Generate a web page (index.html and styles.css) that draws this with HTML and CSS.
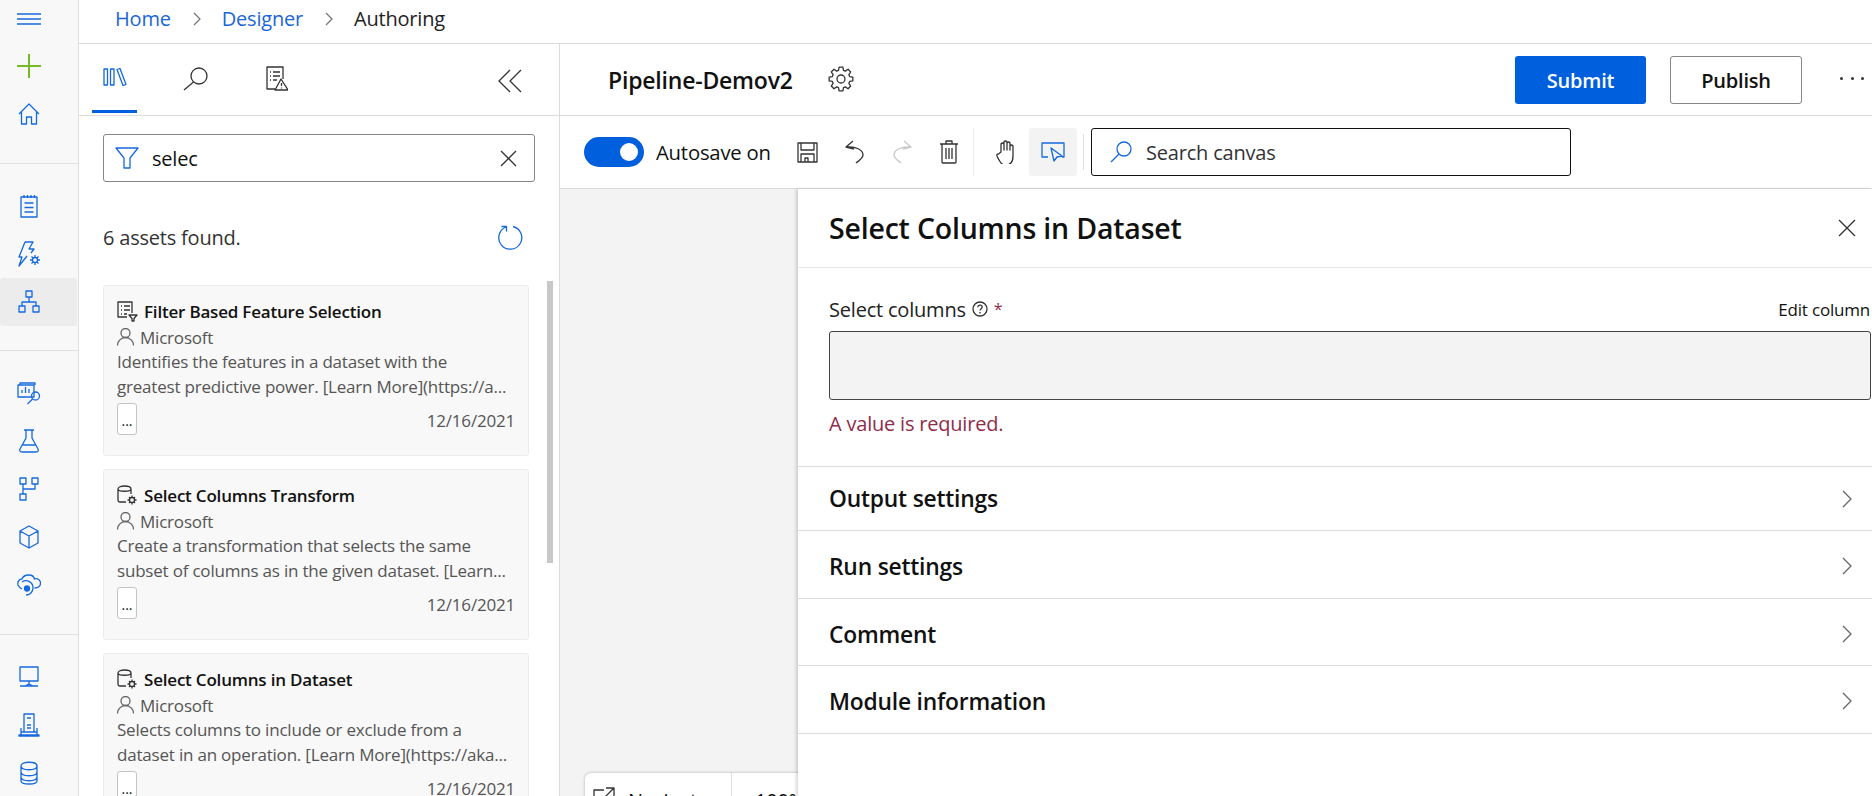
FILE: index.html
```html
<!DOCTYPE html>
<html lang="en">
<head>
<meta charset="utf-8">
<title>Authoring</title>
<link rel="stylesheet" href="styles.css">
</head>
<body>
<div class="app">
  <nav class="nav">
    <div class="nav-menu"><svg width="24" height="12" viewBox="0 0 24 12"><path d="M0 1h24M0 6h24M0 11h24"/></svg></div>
    <div class="nav-item"><svg width="24" height="24" viewBox="0 0 24 24"><path class="green" d="M0 12h24M12 0v24"/></svg></div>
    <div class="nav-item"><svg width="22" height="22" viewBox="0 0 22 22"><path d="M1 11 11 1l10 10M3.500 9v12h5v-7h5v7h5V9"/></svg></div>
    <div class="nav-div"></div>
    <div class="nav-item"><svg width="18" height="24" viewBox="0 0 18 24"><path d="M1 3h16v20H1zM4 1v3M7.500 1v3M11 1v3M14.500 1v3M4.500 9h9M4.500 13.500h9M4.500 18h9"/></svg></div>
    <div class="nav-item"><svg width="22" height="26" viewBox="0 0 22 26"><path d="M7 1h8l-4 7h5l-3 4M9 15 1 25l3-9H1L7 1"/><circle cx="17" cy="19" r="2.500"/><path d="M17 14v2M17 22v2M12 19h2M20 19h2M13.500 15.500l1.500 1.500M19 21l1.500 1.500M13.500 22.500 15 21M19 17l1.500-1.500"/></svg></div>
    <div class="nav-item active"><svg width="22" height="24" viewBox="0 0 22 24"><path d="M8 1h6v6H8zM1 16h6v6H1zM15 16h6v6h-6zM11 7v5M4 16v-4h14v4"/></svg></div>
    <div class="nav-div"></div>
    <div class="nav-item"><svg width="24" height="24" viewBox="0 0 24 24"><path d="M3 4V2h15v2M1 4h16v12H1zM5 12V9M8.500 12V6M12 12V8"/><circle cx="18.500" cy="15" r="4"/><path d="m15.500 18-5 5"/></svg></div>
    <div class="nav-item"><svg width="20" height="24" viewBox="0 0 20 24"><path d="M5 1h10M7 1v8L1 20q-1 3 2 3h14q3 0 2-3L13 9V1M3.500 16h13"/></svg></div>
    <div class="nav-item"><svg width="20" height="24" viewBox="0 0 20 24"><path d="M1 1h6v6H1zM13 1h6v6h-6zM1 17h6v6H1zM4 7v10M16 7v5H4"/></svg></div>
    <div class="nav-item"><svg width="20" height="24" viewBox="0 0 20 24"><path d="m10 1 9 5v12l-9 5-9-5V6zM1 6l9 5 9-5M10 11v12"/></svg></div>
    <div class="nav-item"><svg width="24" height="22" viewBox="0 0 24 22"><path d="M1 11C0 7 3 5 5 5c1-3 4-4 7-4s5 2 5.500 4c3-1 6 1 6 4s-2 5-6 5M5 8a7 7 0 0 1 11 6 7 7 0 0 1-7 7M1 11c1 2 2 3 4 4"/><circle class="dot" cx="10" cy="14.500" r="2.500"/></svg></div>
    <div class="nav-div"></div>
    <div class="nav-item"><svg width="20" height="22" viewBox="0 0 20 22"><path d="M1 1h18v14H1zM10 15v4M1 20h18M6 20l4-2 4 2"/></svg></div>
    <div class="nav-item"><svg width="22" height="24" viewBox="0 0 22 24"><path d="M6 1h10v18H6zM9 5h4M9 12h4M9 15h4M3 15v7M19 15v7M1 22h20v1H1zM3 19h16"/></svg></div>
    <div class="nav-item"><svg width="18" height="24" viewBox="0 0 18 24"><path d="M1 5v15c0 4 16 4 16 0V5M1 5c0-5 16-5 16 0s-16 5-16 0M1 11c0 5 16 5 16 0M1 16c0 5 16 5 16 0"/></svg></div>
  </nav>

  <div class="main">
    <header class="crumbs">
      <a class="crumb-link">Home</a>
      <svg class="chev" width="8" height="14" viewBox="0 0 8 14"><path d="m1 1 6 6-6 6"/></svg>
      <a class="crumb-link">Designer</a>
      <svg class="chev" width="8" height="14" viewBox="0 0 8 14"><path d="m1 1 6 6-6 6"/></svg>
      <span class="crumb-current">Authoring</span>
    </header>

    <div class="workspace">
      <aside class="assets">
        <div class="tabs">
          <div class="tab tab-on"><svg width="24" height="18" viewBox="0 0 24 18"><path class="blue" d="M1 1h3.500v16H1zM7.500 1H11v16H7.500zM14 1.500l3-1 6 16-3 1z"/></svg></div>
          <div class="tab"><svg width="25" height="24" viewBox="0 0 25 24"><circle class="ink" cx="16" cy="9" r="8"/><path class="ink" d="M10.500 15 1 23"/></svg></div>
          <div class="tab"><svg width="22" height="25" viewBox="0 0 22 25"><path class="ink" d="M9 23H1V1h16v12M4 6h1M7 6h7M4 10h1M7 10h7M4 14h1M7 14h4M15 13l-6 11h13zM15.500 17v3M15.500 21.500v1"/></svg></div>
          <div class="tab-end"><svg width="24" height="24" viewBox="0 0 24 24"><path class="ink" d="M12 1 1 12l11 11M23 1 12 12l11 11"/></svg></div>
        </div>

        <div class="filter">
          <svg class="filter-icon" width="24" height="22" viewBox="0 0 24 22"><path class="blue" d="M1 1h22l-8 10v10H9V11z"/></svg>
          <span class="filter-text">selec</span>
          <svg width="17" height="17" viewBox="0 0 17 17"><path class="ink" d="m1 1 15 15M16 1 1 16"/></svg>
        </div>

        <div class="found">
          <span>6 assets found.</span>
          <svg width="25" height="25" viewBox="0 0 25 25"><path class="blue" d="M8 2A11.500 11.500 0 1 0 15 1.500M3.500 1.500h5v5"/></svg>
        </div>

        <div class="list">
          <div class="cards">
            <article class="card">
              <div class="card-title"><svg width="21" height="21" viewBox="0 0 21 21"><path class="ink" d="M10 16H1V1h14v11M4 5h1M7 5h6M4 9h1M7 9h6M4 13h1M7 13h3M12 14h8l-3 3.500V20h-2v-2.500z"/></svg><b>Filter Based Feature Selection</b></div>
              <div class="card-owner"><svg width="17" height="18" viewBox="0 0 17 18"><circle class="grey" cx="8.500" cy="5" r="4.500"/><path class="grey" d="M.5 17.500a8 8 0 0 1 16 0"/></svg><span>Microsoft</span></div>
              <div class="card-desc">Identifies the features in a dataset with the</div>
              <div class="card-desc">greatest predictive power. [Learn More](https://a...</div>
              <div class="card-foot"><span class="more">...</span><span class="date">12/16/2021</span></div>
            </article>
            <article class="card">
              <div class="card-title"><svg width="21" height="21" viewBox="0 0 21 21"><path class="ink" d="M9 17H3q-2 0-2-2V4c0-4 13-4 13 0v5M1 4c0 3 13 3 13 0"/><circle class="ink" cx="15" cy="15" r="2.500"/><path class="ink" d="M15 10.500v2M15 17.500v2M10.500 15h2M17.500 15h2M12 12l1 1M17 17l1 1M12 18l1-1M17 13l1-1"/></svg><b>Select Columns Transform</b></div>
              <div class="card-owner"><svg width="17" height="18" viewBox="0 0 17 18"><circle class="grey" cx="8.500" cy="5" r="4.500"/><path class="grey" d="M.5 17.500a8 8 0 0 1 16 0"/></svg><span>Microsoft</span></div>
              <div class="card-desc">Create a transformation that selects the same</div>
              <div class="card-desc">subset of columns as in the given dataset. [Learn...</div>
              <div class="card-foot"><span class="more">...</span><span class="date">12/16/2021</span></div>
            </article>
            <article class="card">
              <div class="card-title"><svg width="21" height="21" viewBox="0 0 21 21"><path class="ink" d="M9 17H3q-2 0-2-2V4c0-4 13-4 13 0v5M1 4c0 3 13 3 13 0"/><circle class="ink" cx="15" cy="15" r="2.500"/><path class="ink" d="M15 10.500v2M15 17.500v2M10.500 15h2M17.500 15h2M12 12l1 1M17 17l1 1M12 18l1-1M17 13l1-1"/></svg><b>Select Columns in Dataset</b></div>
              <div class="card-owner"><svg width="17" height="18" viewBox="0 0 17 18"><circle class="grey" cx="8.500" cy="5" r="4.500"/><path class="grey" d="M.5 17.500a8 8 0 0 1 16 0"/></svg><span>Microsoft</span></div>
              <div class="card-desc">Selects columns to include or exclude from a</div>
              <div class="card-desc">dataset in an operation. [Learn More](https://aka...</div>
              <div class="card-foot"><span class="more">...</span><span class="date">12/16/2021</span></div>
            </article>
          </div>
          <div class="scrollbar"></div>
        </div>
      </aside>

      <section class="editor">
        <div class="title-bar">
          <h1 class="pipeline">Pipeline-Demov2</h1>
          <svg class="gear" width="26" height="26" viewBox="-13 -13 26 26"><polygon class="ink" points="-2.480,-8.650 -1.880,-11.850 1.880,-11.850 2.480,-8.650 4.360,-7.870 7.050,-9.710 9.710,-7.050 7.870,-4.360 8.650,-2.480 11.850,-1.880 11.850,1.880 8.650,2.480 7.870,4.360 9.710,7.050 7.050,9.710 4.360,7.870 2.480,8.650 1.880,11.850 -1.880,11.850 -2.480,8.650 -4.360,7.870 -7.050,9.710 -9.710,7.050 -7.870,4.360 -8.650,2.480 -11.850,1.880 -11.850,-1.880 -8.650,-2.480 -7.870,-4.360 -9.710,-7.050 -7.050,-9.710 -4.360,-7.870"/><circle class="ink" r="4"/></svg>
          <div class="spacer"></div>
          <button class="btn btn-primary">Submit</button>
          <button class="btn btn-outline">Publish</button>
          <div class="dots"><i></i><i></i><i></i></div>
        </div>

        <div class="toolbar">
          <span class="toggle"><i></i></span>
          <span class="toggle-label">Autosave on</span>
          <div class="tool-group">
            <svg class="t-save" width="21" height="21" viewBox="0 0 21 21"><path class="ink" d="M1 1h19v19H1zM4 1v7h13V1M4 20v-8h13v8M8 20v-4h3v4"/></svg>
            <svg class="t-undo" width="19" height="24" viewBox="0 0 19 24"><path class="ink" d="M8 1 1 7l8 2M1 7c10-1 17 3 17 8 0 3-3 5-7 8"/></svg>
            <svg class="t-redo" width="19" height="24" viewBox="0 0 19 24"><path class="faint" d="M11 1l7 6-8 2M18 7C8 6 1 10 1 15c0 3 3 5 7 8"/></svg>
            <svg class="t-trash" width="20" height="24" viewBox="0 0 20 24"><path class="ink" d="M1 4h18M7 4V1h6v3M3 4v18q0 1 1 1h12q1 0 1-1V4M7 8v11M10 8v11M13 8v11"/></svg>
          </div>
          <svg class="t-hand" width="19" height="24" viewBox="0 0 19 24"><path class="ink" d="M5 12V4q1.500-2 3 0v6-8q1.500-2 3 0v8-7q1.500-2 3 0v7-4q1.500-2 3 0v10c0 6-3 9-7 9-5 0-6-3-9-9q-.5-2 1.500-2z"/></svg>
          <div class="t-select"><svg width="24" height="20" viewBox="0 0 24 20"><path class="blue" d="M7 15H1V1h22v14h-2M10 6l11 8-5 1-3 4z"/></svg></div>
          <div class="t-sep"></div>
          <div class="canvas-search">
            <svg width="22" height="22" viewBox="0 0 22 22"><circle class="blue" cx="14" cy="8" r="7"/><path class="blue" d="m9 13-8 8"/></svg>
            <span>Search canvas</span>
          </div>
        </div>

        <div class="stage">
          <div class="canvas">
            <div class="navigator">
              <div class="nav-left"><svg width="22" height="20" viewBox="0 0 22 20"><path class="ink" d="M20 10v8H1V3h10M13 1h8v8M21 1l-9 9"/></svg><span>Navigator</span></div>
              <div class="nav-zoom">100%</div>
            </div>
          </div>

          <div class="panel">
            <div class="panel-head">
              <h2>Select Columns in Dataset</h2>
              <svg width="18" height="18" viewBox="0 0 18 18"><path class="ink" d="m1 1 16 16M17 1 1 17"/></svg>
            </div>
            <div class="panel-body">
              <div class="field-head">
                <span class="field-label">Select columns</span>
                <svg class="help" width="16" height="16" viewBox="0 0 16 16"><circle class="ink" cx="8" cy="8" r="7"/><path class="ink" d="M5.800 6.200q.2-2 2.200-2 2.200 0 2.200 1.900c0 1.700-2.200 1.600-2.200 3.500M8 11v1.500"/></svg>
                <span class="req">*</span>
                <span class="spacer"></span>
                <a class="edit">Edit column</a>
              </div>
              <div class="field-box"></div>
              <div class="error">A value is required.</div>
            </div>
            <div class="row r1"><span>Output settings</span><svg width="10" height="18" viewBox="0 0 10 18"><path class="grey" d="m1 1 8 8-8 8"/></svg></div>
            <div class="row r2"><span>Run settings</span><svg width="10" height="18" viewBox="0 0 10 18"><path class="grey" d="m1 1 8 8-8 8"/></svg></div>
            <div class="row r3"><span>Comment</span><svg width="10" height="18" viewBox="0 0 10 18"><path class="grey" d="m1 1 8 8-8 8"/></svg></div>
            <div class="row r4"><span>Module information</span><svg width="10" height="18" viewBox="0 0 10 18"><path class="grey" d="m1 1 8 8-8 8"/></svg></div>
          </div>
        </div>
      </section>
    </div>
  </div>
</div>
</body>
</html>
```

FILE: styles.css
```css
* { box-sizing: border-box; }
html, body { margin: 0; height: 100%; overflow: hidden; }
body { font-family: "Open Sans", "Noto Sans", sans-serif; font-size: 20px; color: #111; background: #fff; letter-spacing: -0.01em; }
svg { display: block; flex: none; fill: none; stroke-width: 1.3; stroke-linejoin: round; }
h1, h2 { margin: 0; font-weight: 600; }
button { font: inherit; letter-spacing: inherit; }

.blue { stroke: #1469dc; }
.ink { stroke: #333; }
.grey { stroke: #666; }
.faint { stroke: #c8c8c8; }
.green { stroke: #78b927; stroke-width: 2; }

.app { display: flex; width: 1872px; height: 796px; overflow: hidden; }

/* left rail */
.nav { width: 79px; flex: none; background: #f8f8f8; border-right: 1px solid #e0e0e0; }
.nav svg { stroke: #1469dc; }
.nav .green { stroke: #78b927; }
.nav .dot { fill: #1469dc; }
.nav-menu { height: 38px; margin-bottom: 4px; padding-right: 20px; display: flex; align-items: center; justify-content: center; }
.nav-item { height: 48px; padding-right: 20px; margin-right: 1px; display: flex; align-items: center; justify-content: center; }
.nav-item.active { background: #ececec; border-radius: 3px; }
.nav-div { height: 1px; background: #e0e0e0; margin: 24.500px 0 18px; }

.main { flex: 1; min-width: 0; display: flex; flex-direction: column; }

/* breadcrumb */
.crumbs { height: 44px; flex: none; display: flex; align-items: center; padding: 0 0 6px 36px; border-bottom: 1px solid #dcdcdc; }
.crumb-link { color: #1a66d6; }
.crumb-current { color: #222; }
.chev { margin: 0 21px 0 22px; }
.chev path { stroke: #777; }

.workspace { flex: 1; min-height: 0; display: flex; }

/* assets panel */
.assets { width: 481px; flex: none; border-right: 1px solid #dcdcdc; display: flex; flex-direction: column; min-height: 0; }
.tabs { height: 72px; flex: none; display: flex; border-bottom: 1px solid #dcdcdc; padding-left: 13px; align-items: flex-start; }
.tab { width: 45px; height: 69px; margin-right: 36px; display: flex; justify-content: center; align-items: center; }
.tab-on { border-bottom: 3px solid #005fdc; }
.tab-end { margin-left: auto; margin-right: 37px; padding-top: 25px; }

.filter { height: 48px; margin: 18px 0 0 24px; width: 432px; flex: none; border: 1px solid #868686; border-radius: 3px; display: flex; align-items: center; padding: 0 17px 0 11px; }
.filter-icon { margin-right: 13px; }
.filter-text { flex: 1; }

.found { flex: none; height: 48px; margin: 31px 0 0 24px; width: 420px; display: flex; align-items: center; justify-content: space-between; color: #333; }

.list { flex: 1; min-height: 0; display: flex; margin-top: 20px; overflow: hidden; }
.cards { margin-left: 24px; width: 426px; flex: none; display: flex; flex-direction: column; gap: 13px; padding-top: 4px; }
.scrollbar { width: 6px; height: 282px; background: #c8c8c8; margin-left: 18px; flex: none; }

.card { height: 171px; flex: none; background: #f8f8f8; border: 1px solid #ececec; border-radius: 3px; padding: 12px 13px 0 13px; color: #555; font-size: 17px; }
.card-title { height: 26px; display: flex; align-items: center; gap: 6px; color: #111; font-size: 17px; }
.card-title b { font-weight: 600; padding-top: 1px; }
.card-owner { height: 26px; display: flex; align-items: center; gap: 6px; }
.card-desc { height: 24.500px; line-height: 24.500px; white-space: nowrap; overflow: hidden; }
.card-foot { display: flex; justify-content: space-between; align-items: flex-start; margin-top: 4px; }
.more { width: 20px; height: 32px; background: #fff; border: 1px solid #c4c4c4; border-radius: 3px; color: #111; text-align: center; line-height: 34px; font-size: 14px; letter-spacing: 0; }
.date { padding-top: 6px; }

/* editor */
.editor { flex: 1; min-width: 0; display: flex; flex-direction: column; }
.title-bar { height: 72px; flex: none; display: flex; align-items: center; padding: 0 8px 0 48px; border-bottom: 1px solid #dcdcdc; }
.pipeline { font-size: 23px; }
.gear { margin: 0 0 2px 35px; }
.spacer { flex: 1; }
.btn { width: 131px; height: 48px; margin-top: 1px; border-radius: 3px; font-weight: 600; }
.btn-primary { background: #005fdc; color: #fff; border: 0; }
.btn-outline { background: #fff; color: #111; border: 1px solid #868686; margin-left: 24px; width: 132px; }
.dots { width: 24px; display: flex; justify-content: space-between; margin: 0 0 2px 38px; }
.dots i { width: 3px; height: 3px; border-radius: 50%; background: #333; }

.toolbar { height: 73px; flex: none; display: flex; align-items: center; padding-left: 24px; border-bottom: 1px solid #dcdcdc; }
.toggle { width: 60px; height: 30px; flex: none; border-radius: 15px; background: #005fdc; position: relative; }
.toggle i { position: absolute; top: 6px; right: 6px; width: 18px; height: 18px; border-radius: 50%; background: #fff; }
.toggle-label { margin-left: 12px; width: 141px; flex: none; font-size: 20.300px; }
.tool-group { display: flex; align-items: center; height: 48px; width: 177px; flex: none; border-right: 1px solid #eee; }
.t-undo { margin-left: 27px; }
.t-redo { margin-left: 29px; }
.t-trash { margin-left: 27px; }
.t-hand { margin-left: 22px; }
.t-select { width: 48px; height: 48px; margin-left: 14px; background: #f3f3f3; border-radius: 3px; display: flex; align-items: center; justify-content: center; flex: none; }
.t-sep { width: 1px; height: 36px; background: #ddd; margin: 0 7px 0 6px; flex: none; }
.canvas-search { width: 480px; height: 48px; flex: none; border: 1px solid #111; border-radius: 3px; display: flex; align-items: center; gap: 14px; padding-left: 18px; color: #333; }

.stage { flex: 1; min-height: 0; display: flex; }
.canvas { width: 238px; flex: none; background: #f3f3f3; position: relative; overflow: hidden; }
.navigator { position: absolute; left: 25px; top: 584px; width: 240px; height: 60px; background: #fff; border-radius: 6px 0 0 0; box-shadow: 0 0 3px rgba(0,0,0,.3); display: flex; }
.nav-left { display: flex; gap: 13px; padding: 14px 0 0 8px; width: 147px; border-right: 1px solid #ddd; }
.nav-zoom { padding: 14px 0 0 23px; }

.panel { flex: 1; min-width: 0; background: #fff; box-shadow: -2px 0 3px rgba(0,0,0,.16); position: relative; }
.panel-head { height: 79px; display: flex; align-items: center; justify-content: space-between; padding: 0 16px 0 31px; border-bottom: 1px solid #e6e6e6; }
.panel-head h2 { font-size: 28.500px; }
.panel-body { height: 199px; padding: 27px 0 0 31px; border-bottom: 1px solid #dcdcdc; overflow: hidden; }
.field-head { display: flex; align-items: center; height: 28px; color: #222; white-space: nowrap; }
.help { margin-left: 6px; }
.req { color: #8f2c4b; margin-left: 6px; font-size: 16px; }
.edit { font-size: 17px; color: #111; margin-right: 2px; }
.field-box { height: 69px; margin-top: 8px; margin-right: 1px; background: #f3f3f3; border: 1px solid #444; border-radius: 3px; }
.error { margin-top: 10px; color: #8f2c4b; }

.row { display: flex; align-items: center; justify-content: space-between; padding: 3px 20px 0 31px; border-bottom: 1px solid #dcdcdc; font-size: 22.800px; font-weight: 600; }
.r1 { height: 64px; padding-top: 0; }
.r2 { height: 68px; }
.r3 { height: 67px; padding-top: 4px; }
.r4 { height: 68px; }
```
